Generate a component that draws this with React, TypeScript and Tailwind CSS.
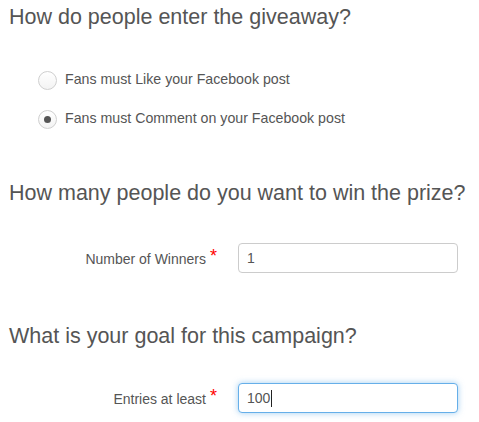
import React from "react";

function Radio({ checked, label }: { checked?: boolean; label: string }) {
  return (
    <label className="flex items-center h-[20px]">
      <span className="w-[19px] h-[19px] rounded-full border border-[#cfcfcf] bg-gradient-to-b from-[#ffffff] to-[#f3f3f3] flex items-center justify-center shrink-0">
        {checked && <span className="w-[7px] h-[7px] rounded-full bg-[#555555]" />}
      </span>
      <span className="ml-[8px] text-[14.2px] text-[#555555]">{label}</span>
    </label>
  );
}

function Field({ label, value, focused }: { label: string; value: string; focused?: boolean }) {
  return (
    <div className="flex items-center">
      <div className="w-[210px] flex justify-end items-start pr-[2px]">
        <span className="text-[14px] text-[#555555] mt-[2px]">{label}</span>
        <span className="text-[#ff0000] text-[18px] leading-[16px] ml-[4px] mt-[1px]">*</span>
      </div>
      <div
        className={
          "ml-[19px] w-[220px] h-[30px] rounded-[4px] border bg-white flex items-center px-[8px] text-[14px] text-[#555555] " +
          (focused
            ? "border-[#66afe9] shadow-[0_0_6px_rgba(102,175,233,0.6)]"
            : "border-[#cccccc]")
        }
      >
        {value}
        {focused && <span className="w-px h-[17px] bg-[#222222] ml-[1px]" />}
      </div>
    </div>
  );
}

export default function App() {
  return (
    <div
      className="w-[479px] h-[422px] bg-white overflow-hidden pl-[9px]"
      style={{ fontFamily: '"Liberation Sans", Arial, sans-serif' }}
    >
      <h3 className="text-[21.5px] text-[#555555] leading-[24px] pt-[5px]">How do people enter the giveaway?</h3>
      <div className="pl-[29px] mt-[41px] flex flex-col gap-[19px]">
        <Radio label="Fans must Like your Facebook post" />
        <Radio checked label="Fans must Comment on your Facebook post" />
      </div>
      <h3 className="text-[21.5px] text-[#555555] leading-[24px] mt-[52px]">How many people do you want to win the prize?</h3>
      <div className="mt-[38px]">
        <Field label="Number of Winners" value="1" />
      </div>
      <h3 className="text-[21.5px] text-[#555555] leading-[24px] mt-[51px]">What is your goal for this campaign?</h3>
      <div className="mt-[35px]">
        <Field label="Entries at least" value="100" focused />
      </div>
    </div>
  );
}
